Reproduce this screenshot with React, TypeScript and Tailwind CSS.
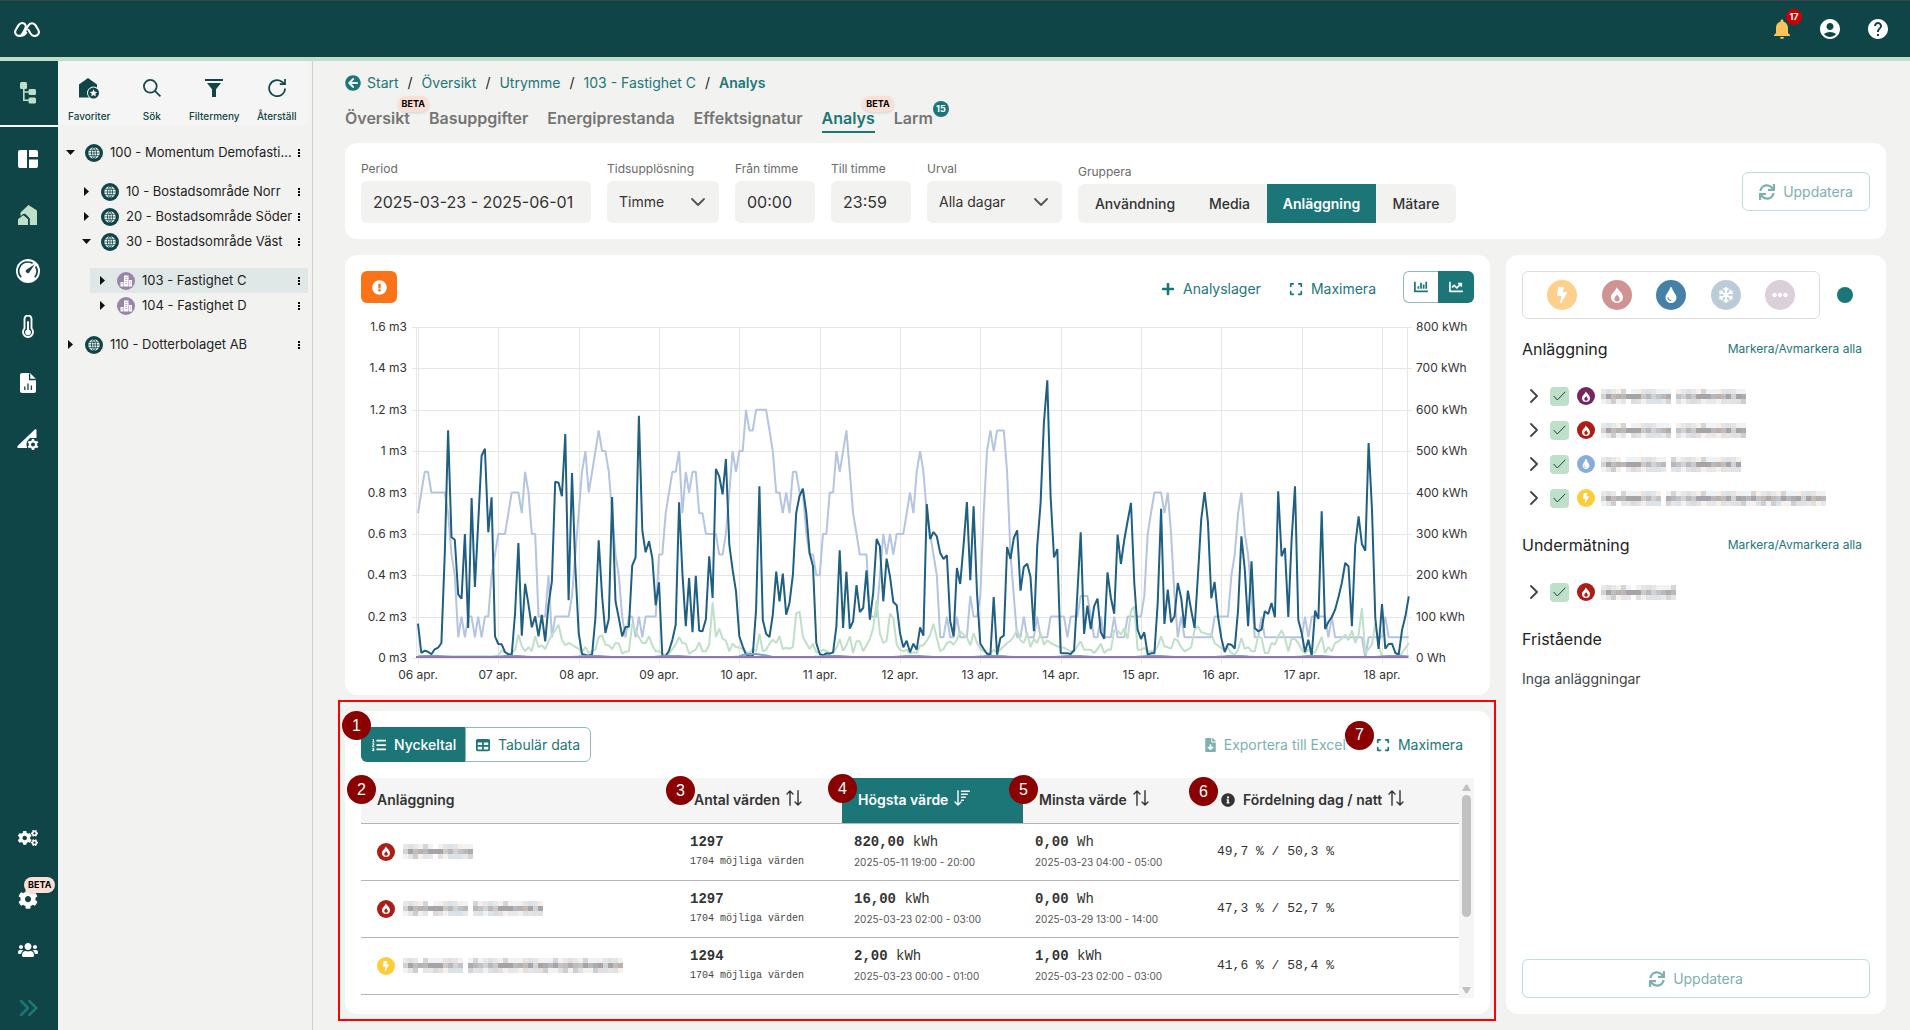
import { Fragment, type ReactNode } from "react";
import { FaAnglesRight, FaExpand, FaTable } from "react-icons/fa6";
import {
  FaArrowCircleLeft,
  FaBolt,
  FaChartBar,
  FaChartLine,
  FaCog,
  FaCogs,
  FaEllipsisH,
  FaExclamationCircle,
  FaFileDownload,
  FaInfoCircle,
  FaListOl,
  FaPlus,
  FaSnowflake,
  FaSync,
  FaTint,
  FaUsers,
} from "react-icons/fa";
import { MdAccountCircle, MdHelp, MdNotifications } from "react-icons/md";

/* ---------- small drawings ---------- */

const Logo = () => (
  <svg viewBox="0 0 26 15" className="h-[15px] w-[26px]" fill="none" stroke="#fff" strokeWidth="2.100" strokeLinecap="round" strokeLinejoin="round">
    <path d="M12.200 10.600 C10.600 13.600 8.200 14 5.600 14 C2 14 0 10.800 1.800 7.800 L4.400 3.400 C6.400 .2 10.400 .4 11.600 3.400 C12.200 5 11.600 6 10.800 7.400 L8.600 11.400 C7.600 13.200 6.400 14 4.600 13.800" />
    <path d="M9.800 11.600 L14.200 3.800 C16 .4 19.800 .4 21.600 3.400 L24.200 7.800 C26 10.800 24 14 20.600 14 C18.200 14 17.200 12.600 16.200 11 L14.400 7.800" />
  </svg>
);

const TreeIcon = () => (
  <svg viewBox="0 0 16 22" className="h-[22px] w-4" fill="#c0dfc9">
    <rect x="0" y="0" width="7" height="7" rx="1.500" />
    <rect x="8.500" y="7" width="7.500" height="6" rx="1.500" />
    <rect x="8.500" y="15.500" width="7.500" height="6" rx="1.500" />
    <path d="M3.800 6v12.200h5M3.800 10h5" fill="none" stroke="#c0dfc9" strokeWidth="1.600" />
  </svg>
);

const DashboardIcon = () => (
  <svg viewBox="0 0 20 18" className="h-[18px] w-5" fill="#fff">
    <path d="M2 0h7v18H2a2 2 0 0 1-2-2V2a2 2 0 0 1 2-2z" />
    <path d="M11 0h7a2 2 0 0 1 2 2v5h-9z" />
    <path d="M11 9.500h9V16a2 2 0 0 1-2 2h-7z" />
  </svg>
);

const HousesIcon = () => (
  <svg viewBox="0 0 20 20" className="h-5 w-5" fill="#c0dfc9">
    <path d="M2.500 7.500 10.500 0 19 5.500V20H11.800V13.500L7 8.600 2.500 12z" />
    <path d="M0 13.600 5.500 9.600 10.600 14V20H0z" stroke="#104547" strokeWidth="1.200" />
    <path d="M0 14.500 5.200 10.600 10 14.500V20H0z" />
  </svg>
);

const GaugeIcon = () => (
  <svg viewBox="0 0 24 24" className="h-6 w-6">
    <circle cx="12" cy="12" r="12" fill="#fff" />
    <path d="M5.200 18.200A9 9 0 0 1 12 3c1.700 0 3.200.4 4.600 1.200M19.600 7.500A9 9 0 0 1 18.800 18.200" fill="none" stroke="#104547" strokeWidth="1.700" />
    <path d="M18.800 5.200 13.600 13a2 2 0 1 1-2.900-2.600z" fill="#104547" />
  </svg>
);

const ThermometerIcon = () => (
  <svg viewBox="0 0 12 24" className="h-6 w-3">
    <path d="M2.500 13.400V4a3.500 3.500 0 0 1 7 0v9.400a5 5 0 1 1-7 0z" fill="none" stroke="#fff" strokeWidth="1.900" />
    <path d="M6 7v10" stroke="#fff" strokeWidth="2" strokeLinecap="round" />
    <circle cx="6" cy="17.300" r="2.900" fill="#fff" />
  </svg>
);

const FileChartIcon = () => (
  <svg viewBox="0 0 16 20" className="h-5 w-4">
    <path d="M2 0h8l6 6v12a2 2 0 0 1-2 2H2a2 2 0 0 1-2-2V2a2 2 0 0 1 2-2z" fill="#fff" />
    <path d="M9.600.5V6.500H16M4.800 13.500V17M8 10.500V17M11.400 12.500V17" fill="none" stroke="#104547" strokeWidth="1.300" />
  </svg>
);

const SignalCogIcon = () => (
  <svg viewBox="0 0 22 21" className="h-[21px] w-[22px]">
    <path d="M1.500 19C0 19 0 17.500.8 16.700L17.500.8C18.500 0 19.500.3 19.500 1.600V9H13L10 13v6z" fill="#fff" />
    <circle cx="16" cy="15.500" r="6.600" fill="#104547" />
    <circle cx="16" cy="15.500" r="3.100" fill="none" stroke="#fff" strokeWidth="2.200" />
    <path d="M16 10v2M16 19v2M11.200 12.800l1.800 1M19 17.200l1.800 1M11.200 18.200l1.800-1M19 13.800l1.800-1" stroke="#fff" strokeWidth="2.400" />
  </svg>
);

const FavoriteHomeIcon = () => (
  <svg viewBox="0 0 20 21" className="h-[21px] w-5">
    <path d="M0 6.500 9 0l9 6.500V19.500H0z" fill="#104547" />
    <circle cx="14.500" cy="15" r="6.500" fill="#f5f5f5" />
    <circle cx="14.500" cy="15" r="5.500" fill="#104547" />
    <path d="m14.500 11.300 1.100 2.400 2.600.3-1.900 1.800.5 2.600-2.300-1.300-2.300 1.300.5-2.600-1.900-1.800 2.600-.3z" fill="#fff" />
  </svg>
);

const SearchIcon = () => (
  <svg viewBox="0 0 18 18" className="h-[18px] w-[18px]" fill="none" stroke="#104547" strokeWidth="1.700">
    <circle cx="7.300" cy="7.300" r="6.400" />
    <path d="m11.900 11.900 5.500 5.500" />
  </svg>
);

const FunnelIcon = () => (
  <svg viewBox="0 0 18 18" className="h-[18px] w-[18px]" fill="#104547">
    <path d="M0 0h18v2H0zM2 4h14l-5 6.200V18H7v-7.800z" />
  </svg>
);

const ResetIcon = () => (
  <svg viewBox="0 0 18 18" className="h-[18px] w-[18px]" fill="none" stroke="#104547" strokeWidth="1.700">
    <path d="M17.100 9.500a8 8 0 1 1-3.300-6.800l2.600 2" />
    <path d="M17 0v5.200h-5.200" />
  </svg>
);

const GlobeIcon = () => (
  <svg viewBox="0 0 18 18" className="h-[18px] w-[18px] shrink-0">
    <circle cx="9" cy="9" r="9" fill="#104547" />
    <circle cx="9" cy="9" r="5.700" fill="#fff" />
    <g fill="none" stroke="#104547" strokeWidth=".8">
      <ellipse cx="9" cy="9" rx="2.500" ry="5.700" />
      <path d="M9 3.300v11.400M3.300 9h11.400M4 6.300h10M4 11.700h10" />
    </g>
  </svg>
);

const BuildingIcon = () => (
  <svg viewBox="0 0 18 18" className="h-[18px] w-[18px] shrink-0">
    <circle cx="9" cy="9" r="9" fill="#9985a9" />
    <path d="M7 14.500V3.500h4.500v11M12 14.500V8h3v6.500M3.500 14.500V10H6.500v4.500z" fill="#fff" />
    <path d="M8.300 5.500h2M8.300 7.500h2M8.300 9.500h2M8.300 11.500h2M4.500 11.800h1.200M12.800 10h1.400M12.800 12h1.400" stroke="#9985a9" strokeWidth=".7" />
  </svg>
);

const Flame = ({ className }: { className: string }) => (
  <svg viewBox="0 0 12 16" className={className} fill="currentColor">
    <path fillRule="evenodd" d="M5.700 0C6 2.600 12 5.400 12 10.200A5.900 5.900 0 0 1 6 16a5.900 5.900 0 0 1-6-5.800C0 6.200 4.600 4.800 5.700 0zM6.200 7.200C5.900 8.800 3.400 9.600 3.400 11.800a2.700 2.700 0 0 0 5.400 0C8.800 9.700 6.600 9 6.200 7.200z" />
  </svg>
);

const ChevronDown = () => (
  <svg viewBox="0 0 14 8" className="pointer-events-none absolute right-3.5 h-2 w-3.5" fill="none" stroke="#555" strokeWidth="1.800" strokeLinecap="round" strokeLinejoin="round">
    <path d="m1 1 6 6 6-6" />
  </svg>
);

const ChevronRight = () => (
  <svg viewBox="0 0 8 14" className="h-3.5 w-2" fill="none" stroke="#444" strokeWidth="1.800" strokeLinecap="round" strokeLinejoin="round">
    <path d="m1 1 6 6-6 6" />
  </svg>
);

const SortIcon = () => (
  <svg viewBox="0 0 16 16" className="mb-1 h-4 w-4" fill="none" stroke="currentColor" strokeWidth="1.400" strokeLinecap="round" strokeLinejoin="round">
    <path d="M4 15.300V1M1 4l3-3 3 3M12 .7V15M9 12l3 3 3-3" />
  </svg>
);

const SortDescIcon = () => (
  <svg viewBox="0 0 16 16" className="mb-1 h-4 w-4" fill="none" stroke="currentColor" strokeWidth="1.400" strokeLinecap="round" strokeLinejoin="round">
    <path d="M4 .7V15M1 12l3 3 3-3M7.500 1.200H15.300M7.500 4.200H13.300M7.500 7.200H11.300M7.500 10.200H9.300" />
  </svg>
);

/* Anonymised names are shown as a mosaic of soft grey tiles. */
const EDGE_TILES = ["#f1f2f4", "#e2e1e0", "#d6d5d6", "#f6efea", "#e8e8e9", "#dbe2e8", "#cfcecf", "#eef3f7", "#dddbda", "#e5e4e6"];
const CORE_TILES = ["#b9b8ba", "#cbc9c9", "#a6a4a8", "#d9d7d6", "#bfc4cb", "#c4bab6", "#adabad", "#d3d2d3", "#b4b2b3", "#c9cfd6"];
function Mosaic({ mask }: { mask: string }) {
  const width = mask.length * 5;
  return (
    <svg viewBox={`0 0 ${width} 15`} width={width} height="15" className="shrink-0" aria-hidden="true">
      {[0, 1, 2].map((row) =>
        mask.split("").map((c, i) => {
          if (c === " " || (c === "-" && row !== 1)) return null;
          const h = (((i + 3) * (i + 11) * (row + 5) * 7919) >> 4) % 10;
          return <rect key={`${row}-${i}`} x={i * 5} y={row * 5} width="5" height="5" fill={row === 1 ? CORE_TILES[h] : EDGE_TILES[h]} />;
        }),
      )}
    </svg>
  );
}

/* ---------- shared pieces ---------- */

const MEDIA_COLOR = { purple: "bg-[#772463]", red: "bg-[#ab1d15]", blue: "bg-[#86aedd]", yellow: "bg-[#ffcb37]" };
type Media = keyof typeof MEDIA_COLOR;

function MediaIcon({ media }: { media: Media }) {
  return (
    <span className={`flex h-[18px] w-[18px] shrink-0 items-center justify-center rounded-full text-white ${MEDIA_COLOR[media]}`}>
      {media === "blue" ? <FaTint className="h-2.5 w-2.5" /> : media === "yellow" ? <FaBolt className="h-2.5 w-2.5" /> : <Flame className="h-[11px] w-2" />}
    </span>
  );
}

const Beta = ({ className }: { className: string }) => (
  <span className={`absolute flex h-4 items-center rounded-full bg-[#fae0d4] px-1 text-[9px] font-bold text-black shadow ${className}`}>BETA</span>
);

const Marker = ({ n, className }: { n: number; className: string }) => (
  <span className={`absolute z-10 flex h-[29px] w-[29px] items-center justify-center rounded-full bg-[#8b0000] font-['Liberation_Sans'] text-base font-normal text-white ${className}`}>{n}</span>
);

/* ---------- tree ---------- */

function TreeRow({ label, indent, open, building, active }: { label: string; indent: string; open?: boolean; building?: boolean; active?: boolean }) {
  return (
    <div className={indent}>
      <div className={`flex h-[25px] items-center pl-1.5 ${active ? "bg-[#e0e8e7]" : ""}`}>
        <button type="button" aria-label={open ? "Fäll ihop" : "Fäll ut"} className="flex w-3 justify-center">
          <svg viewBox="0 0 9 9" className="h-[9px] w-[9px]" fill="#111">
            {open ? <path d="M0 2h9L4.500 7z" /> : <path d="M2 0v9l5-4.500z" />}
          </svg>
        </button>
        <span className="ml-[9px]">{building ? <BuildingIcon /> : <GlobeIcon />}</span>
        <span className="ml-[7px] min-w-0 flex-1 text-[13px] whitespace-nowrap">{label}</span>
        <button type="button" aria-label="Meny" className="mr-2 ml-1 flex w-[3px] flex-col items-center gap-px">
          <i className="h-0.5 w-0.5 bg-black" />
          <i className="h-0.5 w-0.5 bg-black" />
          <i className="h-0.5 w-0.5 bg-black" />
        </button>
      </div>
    </div>
  );
}

function TreePanel() {
  const tools = [
    { label: "Favoriter", icon: <FavoriteHomeIcon /> },
    { label: "Sök", icon: <SearchIcon /> },
    { label: "Filtermeny", icon: <FunnelIcon /> },
    { label: "Återställ", icon: <ResetIcon /> },
  ];
  return (
    <aside className="w-[255px] shrink-0 border-r border-[#cfcfcf] pr-1 text-[#222]">
      <div className="grid h-16 grid-cols-4 bg-[#f5f5f5]">
        {tools.map((t) => (
          <button key={t.label} type="button" className="flex flex-col items-center pt-4 text-[10px] font-medium text-[#104547]">
            <span className="flex h-[22px] items-center">{t.icon}</span>
            <span className="mt-2.5">{t.label}</span>
          </button>
        ))}
      </div>
      <nav aria-label="Fastigheter" className="pt-[15px]">
        <TreeRow label="100 - Momentum Demofasti..." indent="pl-0" open />
        <div className="py-3.5">
          <TreeRow label="10 - Bostadsområde Norr" indent="pl-4" />
          <TreeRow label="20 - Bostadsområde Söder" indent="pl-4" />
          <TreeRow label="30 - Bostadsområde Väst" indent="pl-4" open />
          <div className="pt-3.5">
            <TreeRow label="103 - Fastighet C" indent="pl-8" building active />
            <TreeRow label="104 - Fastighet D" indent="pl-8" building />
          </div>
        </div>
        <TreeRow label="110 - Dotterbolaget AB" indent="pl-0" />
      </nav>
    </aside>
  );
}

/* ---------- rail ---------- */

const RailButton = ({ label, children }: { label: string; children: ReactNode }) => (
  <button type="button" aria-label={label} className="relative flex h-14 w-14 items-center justify-center text-white">
    {children}
  </button>
);

function Rail() {
  return (
    <nav aria-label="Huvudmeny" className="flex w-[58px] shrink-0 flex-col bg-[#104547]">
      <div className="flex h-[66px] items-center justify-center border-b-2 border-white pr-0.5">
        <button type="button" aria-label="Träd"><TreeIcon /></button>
      </div>
      <div className="mt-1 flex flex-col">
        <RailButton label="Översikt"><DashboardIcon /></RailButton>
        <RailButton label="Fastigheter"><HousesIcon /></RailButton>
        <RailButton label="Mätare"><GaugeIcon /></RailButton>
        <RailButton label="Temperatur"><ThermometerIcon /></RailButton>
        <RailButton label="Rapporter"><FileChartIcon /></RailButton>
        <RailButton label="Signaler"><SignalCogIcon /></RailButton>
      </div>
      <div className="mt-auto flex flex-col">
        <RailButton label="Drift"><FaCogs className="h-5 w-5" /></RailButton>
        <RailButton label="Inställningar">
          <FaCog className="mt-2.5 h-5 w-5" />
          <Beta className="top-[11px] left-6" />
        </RailButton>
        <RailButton label="Användare"><FaUsers className="h-5 w-5" /></RailButton>
        <button type="button" aria-label="Expandera" className="flex h-[52px] w-14 items-center justify-center pt-2 text-[#1c7678]">
          <FaAnglesRight className="h-[22px] w-[22px]" />
        </button>
      </div>
    </nav>
  );
}

/* ---------- chart ---------- */

const DAY = 80.333;
const HOUR = DAY / 24;
const X0 = 57;
const TOP = 16;
const PLOT_H = 331;
const BASE = TOP + PLOT_H;

const HEAT_A = [1092,1180,1173,1176,1184,1169,1164,1150,880,512,833,840,1004,1017,823,1105,715,982,790,588,567,818,713,1130,1153,1154,1177,1184,1186,1060,850,1128,972,1035,1103,1070,1130,1066,1145,1035,965,666,669,710,523,1022,640,920,1120,1183,1186,1188,1184,1075,842,1010,1120,1078,712,1025,1075,1130,1102,1101,918,893,468,812,878,845,895,1037,968,1189,1188,1173,1140,1095,728,940,1100,955,1118,948,1113,1115,1078,890,1015,628,650,704,598,855,930,995,1130,1160,1185,1190,1189,1050,680,1080,1122,1132,1065,936,1025,942,1065,1030,945,760,708,687,760,880,920,1150,1183,1187,1181,1182,1178,1100,872,1105,936,1107,1085,976,1057,1045,932,1080,1000,838,860,1025,897,950,1027,1037];
const HEAT_B = [970,1013,993,1028,1002,1020,953,978,583,688,667,680,730,748,737,935,980,775,823,705,577,812,590,850,1002,1018,1032,1035,862,1035,985,978,712,748,685,662,843,772,762,802,965,710,580,340,212,560,743,718,1030,1031,1031,1033,1022,850,668,973,888,958,890,867,968,987,788,865,912,675,763,690,635,580,820,960,988,968,1035,1031,1031,880,597,943,840,938,920,820,865,955,843,902,955,800,630,547,635,866,817,920,985,1027,1003,1005,1017,900,680,780,950,755,955,965,960,905,913,880,923,545,740,715,922,690,530,930,970,1027,990,1038,903,928,605,958,937,922,900,862,820,760,770,950,708,620,703,723,400,600,925,1018,883,1017,1003,1002,1030,1035,960,920,860];
const GREEN_A = [1190,1190,1190,1190,1190,1190,1190,1190,1190,1190,1190,1190,1190,1190,1190,1190,1190,1190,1190,1190,1190,1190,1190,1190,1188,1172,1178,1183,1180,1170,1125,1160,1175,1162,1175,1130,1162,1157,1168,1145,1125,1112,1095,1140,1157,1150,1155,1162,1167,1177,1162,1180,1175,1170,1132,1127,1155,1157,1168,1150,1151,1182,1176,1175,1092,1113,1133,1150,1150,1130,1157,1175,1175,1180,1188,1183,1168,1155,1132,1150,1152,1182,1175,1170,1148,1175,1175,1155,1028,1132,1107,1137,1143,1175,1152,1162,1164,1168,1178,1180,1168,1175,1122,1175,1170,1152,1140,1150,1130,1168,1164,1167,1162,1062,1056,1132,1150,1168,1152,1178,1178,1170,1174,1180,1180,1165,1138,1173,1157,1130,1180,1145,1145,1175,1157,1138,1105,1022,1122,1150,1143,1062,1075,1155];
const GREEN_B = [1020,1025,1020,1032,1028,1030,1008,1007,993,975,942,985,1025,1018,1000,995,1005,990,965,975,983,1007,970,1000,1018,1025,1030,1030,1020,1030,1020,1010,1000,993,980,960,992,1000,970,1012,988,1000,970,1005,992,1000,1005,1010,1013,1014,1020,1025,1025,1010,995,1020,1020,1020,1030,1018,1002,1030,1020,1020,962,963,975,955,988,903,890,1020,1020,1015,1025,1025,1025,1010,980,1010,1013,1017,987,993,1013,1025,1020,1012,960,950,968,970,975,972,1000,1008,1015,1020,1015,1030,1035,1020,985,1018,1012,1025,1025,980,985,1030,1030,1000,1005,980,962,985,1025,988,988,1000,1020,1030,1020,1030,1028,1005,982,1030,1012,1025,1000,995,987,975,992,962,1000,975,895,1030,1018,1005,940,1010,1040,1040,1040,1040,1040,1040,1030,1015,1000];

/* Tenths of a cubic metre as one hex digit per hour, one string per day. */
const WATER = [
  "789988888754121221212245",
  "666788879866222412222235",
  "79a89abaa975421221212222",
  "557899a798997766665568a9",
  "aacbbccccba8878799886554",
  "46688a9ab976555222465656",
  "667879a97654112112111322",
  "37ababbb9531121112111222",
  "221222333211211121112222",
  "236788878631211111111122",
  "222457865311211111111111",
  "121222221211111111101111",
  "121111111",
].join("");

const METER_SCALE = 1 / 3;
const toLine = (ys: number[]) => ys.map((y, i) => `${(X0 + i * HOUR).toFixed(1)},${y.toFixed(1)}`).join(" ");
const meterLine = (a: number[], b: number[]) =>
  toLine([...a.map((v) => BASE - (1195 - v) * METER_SCALE), ...b.map((v) => BASE - (1045 - v) * METER_SCALE)]);
const waterLine = toLine(WATER.split("").map((c) => BASE - (parseInt(c, 16) * PLOT_H) / 16));
const flowLine = toLine(
  WATER.split("").map((_, i) => BASE - 1 - Math.max(0, Math.sin(((i + 2) / 24) * Math.PI * 2)) * (i > 96 && i < 112 ? 3 : 1)),
);

function Chart() {
  const right = 1047;
  const days = ["06", "07", "08", "09", "10", "11", "12", "13", "14", "15", "16", "17", "18"];
  return (
    <svg viewBox="0 0 1113 376" className="mt-2 block w-full text-[12px]" fill="#333" role="img" aria-label="Förbrukning per timme">
      {Array.from({ length: 9 }, (_, i) => {
        const y = Math.round(BASE - (i * PLOT_H) / 8);
        return (
          <Fragment key={i}>
            <path d={`M51 ${y + 0.5}H1051`} stroke="#e6e6e6" />
            <text x="46" y={y + 4} textAnchor="end">{`${(i * 2) / 10} m3`}</text>
            <text x="1055" y={y + 4}>{i === 0 ? "0 Wh" : `${i}00 kWh`}</text>
          </Fragment>
        );
      })}
      <path d={`M55.500 ${TOP}V${BASE}M${right - 0.5} ${TOP}V${BASE}`} stroke="#e6e6e6" />
      {days.map((d, i) => {
        const x = Math.round(X0 + i * DAY);
        return (
          <Fragment key={d}>
            <path d={`M${x + 0.5} ${TOP}V${BASE + 5}`} stroke="#e6e6e6" />
            <text x={x} y={BASE + 21} textAnchor="middle">{`${d} apr.`}</text>
          </Fragment>
        );
      })}
      <g fill="none" strokeWidth="2" strokeLinejoin="bevel">
        <polyline points={waterLine} stroke="#b5c4e0" />
        <polyline points={meterLine(GREEN_A, GREEN_B)} stroke="#c0dfc9" />
        <polyline points={meterLine(HEAT_A, HEAT_B)} stroke="#1f5f82" />
        <polyline points={flowLine} stroke="#7f9fcb" />
        <path d={`M55 ${BASE - 1}H${right}`} stroke="#8b7ba6" />
      </g>
    </svg>
  );
}

/* ---------- filters ---------- */

const labelCls = "mb-1 block text-[12px] leading-4 text-[#6b6b6b]";
const boxCls = "h-[42px] w-full rounded-md bg-[#f2f2f1] text-[#333]";

function TextField({ id, label, value, width }: { id: string; label: string; value: string; width: string }) {
  return (
    <div className={width}>
      <label htmlFor={id} className={labelCls}>{label}</label>
      <input id={id} defaultValue={value} className={`${boxCls} px-3 text-base`} />
    </div>
  );
}

function SelectField({ id, label, value, width }: { id: string; label: string; value: string; width: string }) {
  return (
    <div className={width}>
      <label htmlFor={id} className={labelCls}>{label}</label>
      <div className="relative flex items-center">
        <select id={id} className={`${boxCls} appearance-none px-3 text-sm`}>
          <option>{value}</option>
        </select>
        <ChevronDown />
      </div>
    </div>
  );
}

function Filters() {
  const groups = [
    { label: "Användning", width: "w-[114px]" },
    { label: "Media", width: "w-[75px]" },
    { label: "Anläggning", width: "w-[109px]" },
    { label: "Mätare", width: "w-20" },
  ];
  return (
    <section className="mt-2.5 flex items-start rounded-xl bg-white p-4">
      <div className="flex min-w-0 flex-1 items-start gap-4 pt-0.5">
        <TextField id="period" label="Period" value="2025-03-23 - 2025-06-01" width="w-[230px]" />
        <SelectField id="resolution" label="Tidsupplösning" value="Timme" width="w-28" />
        <TextField id="from" label="Från timme" value="00:00" width="w-20" />
        <TextField id="to" label="Till timme" value="23:59" width="w-20" />
        <SelectField id="selection" label="Urval" value="Alla dagar" width="w-[135px]" />
        <div role="group" aria-label="Gruppera" className="pt-[3px]">
          <span className={labelCls}>Gruppera</span>
          <div className="flex h-[39px] overflow-hidden rounded-md bg-[#f2f2f1] text-sm font-medium text-[#333]">
            {groups.map((g) => (
              <button key={g.label} type="button" className={`${g.width} ${g.label === "Anläggning" ? "bg-[#1c7678] font-semibold text-white" : ""}`}>
                {g.label}
              </button>
            ))}
          </div>
        </div>
      </div>
      <button type="button" className="mt-[13px] flex h-[39px] w-32 items-center justify-center gap-2 rounded-md border border-[#c0dbdb] text-sm text-[#7db0b1]">
        <FaSync className="h-4 w-4" />
        Uppdatera
      </button>
    </section>
  );
}

/* ---------- table ---------- */

const ROWS: { media: Media; mask: string; count: string; max: [string, string, string]; min: [string, string, string]; split: string }[] = [
  { media: "red", mask: "xxxxxx-xxxxxxx", count: "1297", max: ["820,00", "kWh", "2025-05-11 19:00 - 20:00"], min: ["0,00", "Wh", "2025-03-23 04:00 - 05:00"], split: "49,7 % / 50,3 %" },
  { media: "red", mask: "xxxxx-xxxxxxx xxxxxxxxxxxxxx", count: "1297", max: ["16,00", "kWh", "2025-03-23 02:00 - 03:00"], min: ["0,00", "Wh", "2025-03-29 13:00 - 14:00"], split: "47,3 % / 52,7 %" },
  { media: "yellow", mask: "xxx-xxxxxxxx xxxxxxxxxxxxxxxxxxxxxxxxxxxxxxx", count: "1294", max: ["2,00", "kWh", "2025-03-23 00:00 - 01:00"], min: ["1,00", "kWh", "2025-03-23 02:00 - 03:00"], split: "41,6 % / 58,4 %" },
];

function ValueCell({ value }: { value: [string, string, string] }) {
  return (
    <td className="px-3">
      <div className="font-['Liberation_Mono'] text-sm leading-5"><b>{value[0]}</b> {value[1]}</div>
      <div className="text-[10px] leading-5 text-[#555]">{value[2]}</div>
    </td>
  );
}

function KeyFigures() {
  const th = "relative h-[45px] px-4 text-left text-sm font-semibold";
  return (
    <section className="relative mt-4 rounded-xl bg-white p-4">
      <div className="pointer-events-none absolute -top-[11px] -right-[6px] -bottom-[7px] -left-[7px] border-2 border-[#ff0000]" />
      <div className="flex items-center justify-between">
        <div className="relative flex h-[35px] text-sm">
          <Marker n={1} className="-top-4 -left-[19px]" />
          <button type="button" className="flex w-[104px] items-center gap-2 rounded-l-md bg-[#1c7678] pl-[11px] font-medium text-white">
            <FaListOl className="h-3.5 w-3.5" />
            Nyckeltal
          </button>
          <button type="button" className="flex w-[126px] items-center gap-2 rounded-r-md border border-[#8ebabb] pl-2.5 text-[#1c7678]">
            <FaTable className="h-3.5 w-3.5" />
            Tabulär data
          </button>
        </div>
        <div className="flex items-center gap-[30px] pr-[11px] text-sm text-[#1c7678]">
          <button type="button" className="relative flex items-center gap-2 text-[#7db0b1]">
            <FaFileDownload className="h-3.5 w-[11px]" />
            Exportera till Excel
            <Marker n={7} className="-top-3.5 -right-[28px]" />
          </button>
          <button type="button" className="flex items-center gap-2">
            <FaExpand className="h-3.5 w-3.5" />
            Maximera
          </button>
        </div>
      </div>

      <div className="mt-4 flex">
        <table className="h-[217px] flex-1 table-fixed border-collapse self-start text-[#333]">
          <colgroup>
            <col className="w-[317px]" />
            <col className="w-[164px]" />
            <col className="w-[181px]" />
            <col className="w-[182px]" />
            <col />
          </colgroup>
          <thead>
            <tr className="border-b border-[#b5b5b5] bg-[#f5f5f5]">
              <th scope="col" className={th}>
                <Marker n={2} className="-top-[3px] -left-3.5" />
                Anläggning
              </th>
              <th scope="col" className={th}>
                <Marker n={3} className="-top-0.5 -left-3" />
                <button type="button" className="flex items-center gap-1.5">Antal värden <SortIcon /></button>
              </th>
              <th scope="col" className={`${th} bg-[#1c7678] text-white`} aria-sort="descending">
                <Marker n={4} className="-top-1 -left-3.5" />
                <button type="button" className="flex items-center gap-1.5">Högsta värde <SortDescIcon /></button>
              </th>
              <th scope="col" className={th}>
                <Marker n={5} className="-top-[3px] -left-3.5" />
                <button type="button" className="flex items-center gap-1.5">Minsta värde <SortIcon /></button>
              </th>
              <th scope="col" className={th}>
                <Marker n={6} className="-top-px -left-4" />
                <button type="button" className="flex items-center gap-1.5">
                  <FaInfoCircle className="mr-0.5 h-3.5 w-3.5" />
                  Fördelning dag / natt <SortIcon />
                </button>
              </th>
            </tr>
          </thead>
          <tbody>
            {ROWS.map((r) => (
              <tr key={r.split} className="h-[57px] border-b border-[#b5b5b5]">
                <td className="px-4">
                  <div className="flex items-center gap-2"><MediaIcon media={r.media} /><Mosaic mask={r.mask} /></div>
                </td>
                <td className="px-3 font-['Liberation_Mono']">
                  <div className="text-sm leading-5 font-bold">{r.count}</div>
                  <div className="text-[10px] leading-5 text-[#444]">1704 möjliga värden</div>
                </td>
                <ValueCell value={r.max} />
                <ValueCell value={r.min} />
                <td className="px-3 font-['Liberation_Mono'] text-[13px]">{r.split}</td>
              </tr>
            ))}
          </tbody>
        </table>
        <div className="flex h-[220px] w-[15px] shrink-0 flex-col items-center bg-[#f5f5f5] py-1" aria-hidden="true">
          <svg viewBox="0 0 9 7" className="mt-0.5 h-[7px] w-[9px]" fill="#c1c1c1"><path d="M0 7 3.500.8h2L9 7z" /></svg>
          <span className="mt-1 h-[122px] w-[9px] rounded-full bg-[#c1c1c1]" />
          <svg viewBox="0 0 9 7" className="mt-auto h-[7px] w-[9px]" fill="#c1c1c1"><path d="M0 0 3.500 6.200h2L9 0z" /></svg>
        </div>
      </div>
    </section>
  );
}

/* ---------- right panel ---------- */

function PlantRow({ media, mask, id }: { media: Media; mask: string; id: string }) {
  return (
    <div className="flex h-[34px] items-center pl-2">
      <button type="button" aria-label="Visa mätare"><ChevronRight /></button>
      <span className="relative ml-3 flex h-[19px] w-[19px] items-center justify-center">
        <input id={id} type="checkbox" defaultChecked aria-label={`Anläggning ${id}`} className="absolute inset-0 appearance-none rounded-sm bg-[#c0dfc9]" />
        <svg viewBox="0 0 13 10" className="pointer-events-none relative h-2.5 w-[13px]" fill="none" stroke="#104547" strokeWidth="1">
          <path d="m.7 5 3.600 4L12.300.8" />
        </svg>
      </span>
      <span className="mr-1.5 ml-2"><MediaIcon media={media} /></span>
      <Mosaic mask={mask} />
    </div>
  );
}

const PlantHeading = ({ title }: { title: string }) => (
  <div className="flex items-center justify-between pr-2">
    <h2 className="text-base text-[#222]">{title}</h2>
    <button type="button" className="text-[12px] text-[#1c7678]">Markera/Avmarkera alla</button>
  </div>
);

function PlantPanel() {
  const media = [
    { label: "El", color: "bg-[#fdd08c]", icon: <FaBolt className="h-4 w-4" /> },
    { label: "Värme", color: "bg-[#cf9391]", icon: <Flame className="h-4 w-3" /> },
    { label: "Vatten", color: "bg-[#4581a7]", icon: <FaTint className="h-4 w-4" /> },
    { label: "Kyla", color: "bg-[#bbccd9]", icon: <FaSnowflake className="h-4 w-4" /> },
    { label: "Övrigt", color: "bg-[#dbcfd9]", icon: <FaEllipsisH className="h-4 w-4" /> },
  ];
  return (
    <aside className="flex w-[380px] shrink-0 flex-col rounded-xl bg-white p-4">
      <div className="flex items-center">
        <div className="flex h-12 w-[298px] items-center justify-between rounded-md border border-[#dedede] px-6">
          {media.map((m) => (
            <button key={m.label} type="button" aria-label={m.label} className={`flex h-[30px] w-[30px] items-center justify-center rounded-full text-white ${m.color}`}>
              {m.icon}
            </button>
          ))}
        </div>
        <span className="ml-[17px] h-4 w-4 rounded-full bg-[#1c7678]" />
      </div>
      <div className="mt-[18px]"><PlantHeading title="Anläggning" /></div>
      <div className="mt-[18px]">
        <PlantRow id="a1" media="purple" mask="xxxxx-xxxxxxxx xxxxxxxxxxxxxx" />
        <PlantRow id="a2" media="red" mask="xxxxx-xxxxxxxx xxxxxxxxxxxxxx" />
        <PlantRow id="a3" media="blue" mask="xxxx-xxxxxxxx xxxxxxxxxxxxxx" />
        <PlantRow id="a4" media="yellow" mask="xxx-xxxxxxxx xxxxxxxxxxxxxxxxxxxxxxxxxxxxxxxx" />
      </div>
      <div className="mt-[18px]"><PlantHeading title="Undermätning" /></div>
      <div className="mt-[18px]">
        <PlantRow id="u1" media="red" mask="xxxxxx-xxxxxxxx" />
      </div>
      <h2 className="mt-[18px] text-base text-[#222]">Fristående</h2>
      <p className="mt-[18px] text-sm text-[#444]">Inga anläggningar</p>
      <button type="button" className="mt-auto flex h-[39px] items-center justify-center gap-2 rounded-md border border-[#c0dbdb] text-sm text-[#7db0b1]">
        <FaSync className="h-4 w-4" />
        Uppdatera
      </button>
    </aside>
  );
}

/* ---------- page ---------- */

export default function App() {
  const crumbs = ["Start", "Översikt", "Utrymme", "103 - Fastighet C", "Analys"];
  const tabs = ["Översikt", "Basuppgifter", "Energiprestanda", "Effektsignatur", "Analys", "Larm"];
  return (
    <div className="flex min-h-screen flex-col bg-[#f2f2f0] font-['Inter',sans-serif] text-[#222]">
      <header className="flex h-[61px] items-center justify-between border-t border-b-4 border-t-[#3f4546] border-b-[#c0dfc9] bg-[#104547] pr-5 pl-3.5 text-white">
        <Logo />
        <div className="flex items-center gap-6">
          <button type="button" aria-label="Aviseringar" className="relative">
            <MdNotifications className="h-6 w-6 text-[#f7c35f]" />
            <span className="absolute -top-2 left-4 flex h-4 w-4 items-center justify-center rounded-full bg-[#c80000] text-[9px] font-bold">17</span>
          </button>
          <button type="button" aria-label="Konto"><MdAccountCircle className="h-6 w-6" /></button>
          <button type="button" aria-label="Hjälp"><MdHelp className="h-6 w-6" /></button>
        </div>
      </header>

      <div className="flex flex-1">
        <Rail />
        <TreePanel />
        <main className="flex min-w-0 flex-1 flex-col pt-3 pr-6 pb-4 pl-8">
          <nav aria-label="Brödsmulor" className="flex h-5 items-center text-sm">
            <FaArrowCircleLeft className="mr-1.5 h-4 w-4 text-[#1c7678]" />
            {crumbs.map((c, i) => (
              <Fragment key={c}>
                {i > 0 && <span className="mx-[9px]">/</span>}
                <a href="#" className={`text-[#1c7678] ${i === 4 ? "font-semibold" : ""}`}>{c}</a>
              </Fragment>
            ))}
          </nav>
          <nav aria-label="Flikar" className="mt-[13px] flex gap-[19px] text-base font-semibold text-[#757575]">
            {tabs.map((t) => (
              <a key={t} href="#" className={`relative border-b-2 pb-px ${t === "Analys" ? "border-[#1c7678] text-[#1c7678]" : "border-transparent"}`}>
                {t}
                {(t === "Översikt" || t === "Analys") && <Beta className="-top-2.5 -right-[19px]" />}
                {t === "Larm" && (
                  <span className="absolute -top-[5px] -right-4 flex h-4 w-4 items-center justify-center rounded-full bg-[#1c7678] text-[9px] font-bold text-white">15</span>
                )}
              </a>
            ))}
          </nav>

          <Filters />

          <div className="mt-4 flex flex-1 gap-4">
            <div className="flex min-w-0 flex-1 flex-col">
              <section className="rounded-xl bg-white px-4 pt-4 pb-2">
                <div className="flex h-8 items-center justify-between">
                  <button type="button" aria-label="Varning" className="flex h-8 w-9 items-center justify-center rounded-md bg-[#fb7318] text-white">
                    <FaExclamationCircle className="h-[15px] w-[15px]" />
                  </button>
                  <div className="flex items-center text-sm text-[#1c7678]">
                    <button type="button" className="mr-7 flex items-center gap-2 pt-1"><FaPlus className="h-3.5 w-3.5" />Analyslager</button>
                    <button type="button" className="mr-[27px] flex items-center gap-2 pt-1"><FaExpand className="h-3.5 w-3.5" />Maximera</button>
                    <button type="button" aria-label="Stapeldiagram" className="flex h-8 w-[35px] items-center justify-center rounded-l-md border border-r-0 border-[#8ebabb]"><FaChartBar className="h-3.5 w-3.5" /></button>
                    <button type="button" aria-label="Linjediagram" className="flex h-8 w-9 items-center justify-center rounded-r-md bg-[#1c7678] text-white"><FaChartLine className="h-3.5 w-3.5" /></button>
                  </div>
                </div>
                <Chart />
              </section>
              <KeyFigures />
            </div>
            <PlantPanel />
          </div>
        </main>
      </div>
    </div>
  );
}
